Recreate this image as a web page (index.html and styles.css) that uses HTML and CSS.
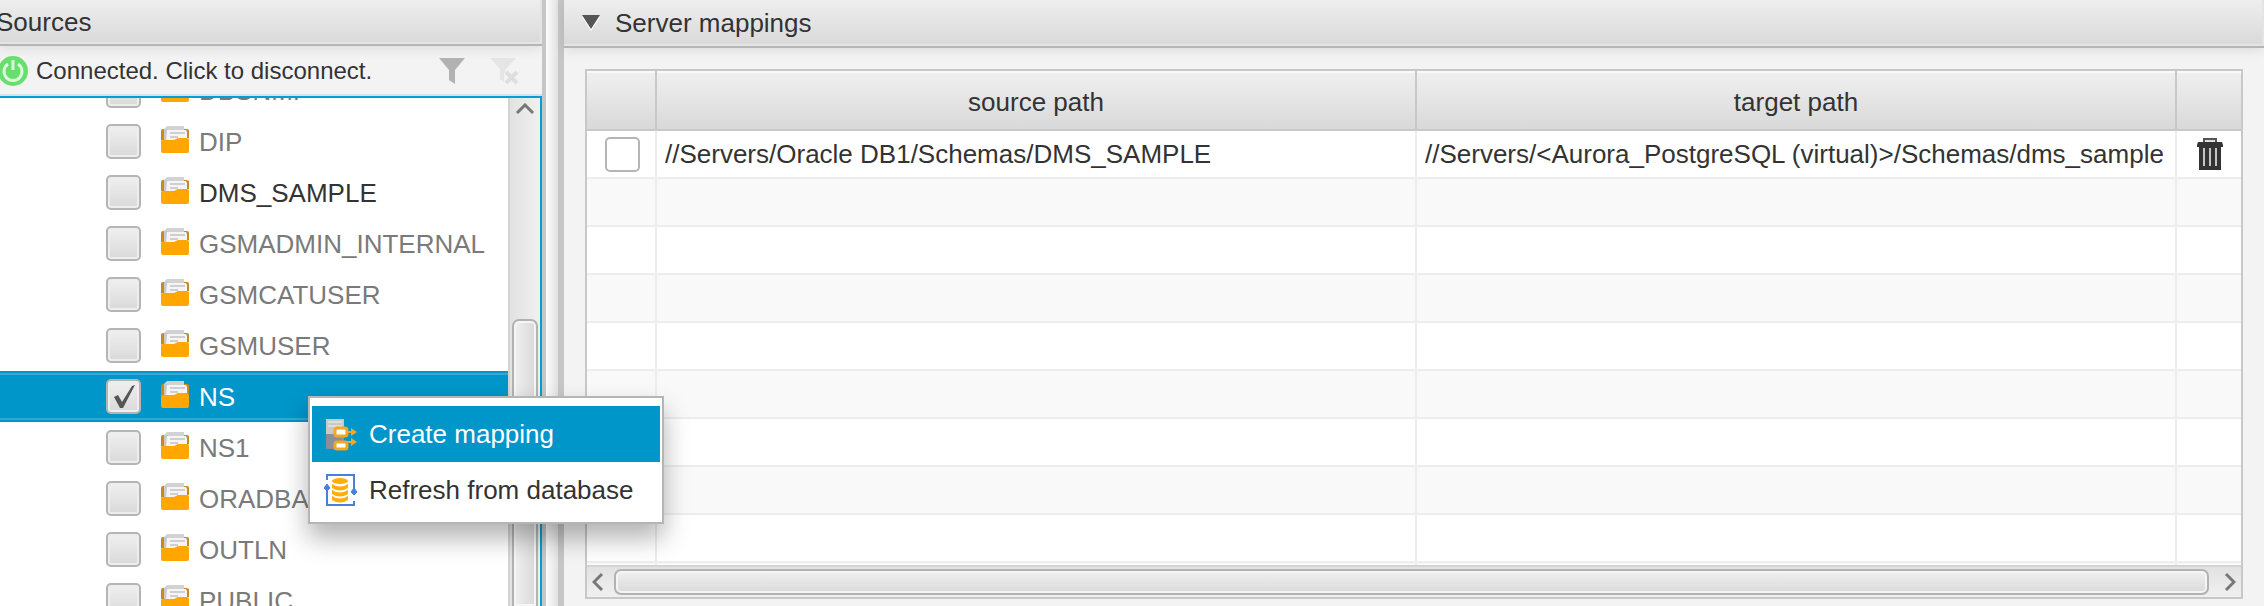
FILE: index.html
```html
<!DOCTYPE html>
<html lang="en">
  <head>
    <meta charset="UTF-8" />
    <meta name="viewport" content="width=device-width, initial-scale=1.0" />
    <title>Server mappings</title>
    <link rel="stylesheet" href="styles.css">
  </head>
  <body>
    <!-- shared icons -->
    <svg class="sprite" aria-hidden="true">
      <symbol id="folder" viewBox="0 0 32 32">
        <path d="M2 5q0-2 2-2h3v11H2zM25 3h3q2 0 2 2v7h-5z" fill="#c98a1c" />
        <path d="M5 3l3-3h17v4H5z" fill="#d2d2d2" />
        <path d="M5 3h4v12H5z" fill="#cacaca" />
        <path d="M8 4h19l1 2v8H18l-3 2H7z" fill="#f5f5f5" />
        <path d="M11 7h15M11 11h8" stroke="#cfcfcf" stroke-width="2" />
        <path d="M2 15q0-1 2-1h11l4-2h9q2 0 2 2v11q0 2-2 2H4q-2 0-2-2z" fill="#ffa600" />
      </symbol>
    </svg>

    <div class="app">
      <section class="sources">
        <h2 class="panel-title">Sources</h2>
        <div class="toolbar">
          <button type="button" class="connection">
            <svg width="30" height="30" viewBox="0 0 30 30">
              <circle cx="15" cy="15" r="15" fill="#67df6c" />
              <path d="M10 8a9 9 0 1 0 10 0M15 4v10" fill="none" stroke="#dcfadc" stroke-width="3" />
            </svg>
            Connected. Click to disconnect.
          </button>
          <button type="button" class="tool" aria-label="Filter">
            <svg width="28" height="28" viewBox="0 0 28 28">
              <path d="M1 1h26L17 13v14l-6-4V13z" fill="#b2b2b2" />
            </svg>
          </button>
          <button type="button" class="tool" aria-label="Clear filter" disabled>
            <svg width="28" height="28" viewBox="0 0 28 28">
              <path d="M0 1h26L16 12l-2 5v8l-4-3V12z" fill="#e5e5e5" />
              <path d="M16 15l11 11M27 15L16 26" stroke="#dedede" stroke-width="4" />
            </svg>
          </button>
        </div>

        <div class="tree-box">
          <ul class="tree">
            <li><label><input type="checkbox"><svg class="folder"><use href="#folder" /></svg>DBSNMP</label></li>
            <li><label><input type="checkbox"><svg class="folder"><use href="#folder" /></svg>DIP</label></li>
            <li class="mapped"><label><input type="checkbox"><svg class="folder"><use href="#folder" /></svg>DMS_SAMPLE</label></li>
            <li><label><input type="checkbox"><svg class="folder"><use href="#folder" /></svg>GSMADMIN_INTERNAL</label></li>
            <li><label><input type="checkbox"><svg class="folder"><use href="#folder" /></svg>GSMCATUSER</label></li>
            <li><label><input type="checkbox"><svg class="folder"><use href="#folder" /></svg>GSMUSER</label></li>
            <li class="selected"><label><input type="checkbox" checked><svg class="folder"><use href="#folder" /></svg>NS</label></li>
            <li><label><input type="checkbox"><svg class="folder"><use href="#folder" /></svg>NS1</label></li>
            <li><label><input type="checkbox"><svg class="folder"><use href="#folder" /></svg>ORADBA</label></li>
            <li><label><input type="checkbox"><svg class="folder"><use href="#folder" /></svg>OUTLN</label></li>
            <li><label><input type="checkbox"><svg class="folder"><use href="#folder" /></svg>PUBLIC</label></li>
          </ul>
          <div class="scroll-y">
            <button type="button" aria-label="Scroll up">
              <svg width="20" height="12" viewBox="0 0 20 12">
                <path d="M2 10l8-8 8 8" fill="none" stroke="#777" stroke-width="3" />
              </svg>
            </button>
            <div class="thumb"></div>
          </div>
        </div>
      </section>

      <div class="splitter"></div>

      <section class="mappings">
        <h2 class="panel-title">
          <svg width="18" height="16" viewBox="0 0 18 16">
            <path d="M0 2h18L9 16z" fill="#fff" />
            <path d="M0 0h18L9 14z" fill="#555" />
          </svg>
          Server mappings
        </h2>
        <div class="mappings-body">
          <div class="table-box">
            <div class="table-view">
              <table>
                <colgroup>
                  <col class="col-check">
                  <col>
                  <col>
                  <col class="col-delete">
                </colgroup>
                <thead>
                  <tr>
                    <th></th>
                    <th>source path</th>
                    <th>target path</th>
                    <th></th>
                  </tr>
                </thead>
                <tbody>
                  <tr>
                    <td class="center"><input type="checkbox" class="flat" aria-label="Select mapping"></td>
                    <td>//Servers/Oracle DB1/Schemas/DMS_SAMPLE</td>
                    <td>//Servers/&lt;Aurora_PostgreSQL (virtual)&gt;/Schemas/dms_sample</td>
                    <td class="center">
                      <button type="button" class="delete" aria-label="Delete mapping">
                        <svg width="26" height="32" viewBox="0 0 26 32">
                          <path d="M6 0h14v5H6z" fill="#555" />
                          <path d="M8 2h10v2H8z" fill="#ddd" />
                          <path d="M1 4h24l1 3v2H0V7z" fill="#333" />
                          <path d="M2 9h22v23H2z" fill="#333" />
                          <path d="M7 10v18M13 10v18M19 10v18" stroke="#c4c4c4" stroke-width="2" />
                        </svg>
                      </button>
                    </td>
                  </tr>
                  <tr><td></td><td></td><td></td><td></td></tr>
                  <tr><td></td><td></td><td></td><td></td></tr>
                  <tr><td></td><td></td><td></td><td></td></tr>
                  <tr><td></td><td></td><td></td><td></td></tr>
                  <tr><td></td><td></td><td></td><td></td></tr>
                  <tr><td></td><td></td><td></td><td></td></tr>
                  <tr><td></td><td></td><td></td><td></td></tr>
                  <tr><td></td><td></td><td></td><td></td></tr>
                  <tr><td></td><td></td><td></td><td></td></tr>
                </tbody>
              </table>
            </div>
            <div class="scroll-x">
              <button type="button" aria-label="Scroll left">
                <svg width="12" height="20" viewBox="0 0 12 20">
                  <path d="M10 2l-8 8 8 8" fill="none" stroke="#777" stroke-width="3" />
                </svg>
              </button>
              <div class="thumb"></div>
              <button type="button" aria-label="Scroll right">
                <svg width="12" height="20" viewBox="0 0 12 20">
                  <path d="M2 2l8 8-8 8" fill="none" stroke="#777" stroke-width="3" />
                </svg>
              </button>
            </div>
          </div>
        </div>
      </section>
    </div>

    <div class="context-menu" role="menu">
      <button type="button" role="menuitem" class="active">
        <svg width="34" height="34" viewBox="0 0 34 34">
          <path d="M2 2h18v15H2z" fill="#c9c9c9" />
          <path d="M4 5h14M4 9h14" stroke="#dedede" stroke-width="2" />
          <path d="M2 17h18v15H2z" fill="#8a8d9c" />
          <path d="M22 15h8M22 25h8" stroke="#f5a623" stroke-width="2" />
          <path d="M27 11l6 4-6 4zM27 21l6 4-6 4z" fill="#f5a623" />
          <rect x="11" y="11" width="12" height="8" rx="2" fill="#fff" stroke="#f5a623" stroke-width="3" />
          <rect x="11" y="25" width="12" height="7" rx="2" fill="#fff" stroke="#f5a623" stroke-width="3" />
        </svg>
        Create mapping
      </button>
      <button type="button" role="menuitem">
        <svg width="34" height="34" viewBox="0 0 34 34">
          <path d="M3 7V2h27v17M30 28v4H3V16" fill="none" stroke="#4a80d9" stroke-width="2" />
          <path d="M3 11l3 4-3 3-3-3zM30 15l3 4-3 3-3-3z" fill="#4a80d9" stroke="#4a80d9" />
          <ellipse cx="16" cy="8" rx="8" ry="3" fill="#ffae0c" />
          <path d="M8 11q8 5 16 0v4q-8 5-16 0zM8 17q8 5 16 0v4q-8 5-16 0zM8 23q8 5 16 0v4q-8 5-16 0z" fill="#ffae0c" />
        </svg>
        Refresh from database
      </button>
    </div>
  </body>
</html>
```

FILE: styles.css
```css
* {
  box-sizing: border-box;
}

body {
  margin: 0;
  font-family: "Liberation Sans", Arial, sans-serif;
  font-size: 26px;
  line-height: 32px;
  color: #333;
  background: #f3f3f3;
}

button {
  display: flex;
  align-items: center;
  padding: 0;
  border: none;
  background: none;
  font: inherit;
  color: inherit;
  cursor: pointer;
}

.sprite {
  display: none;
}

.app {
  display: grid;
  grid-template-columns: 542px 22px 1fr;
  height: 100vh;
  overflow: hidden;
}

.panel-title {
  display: flex;
  align-items: center;
  flex: none;
  margin: 0;
  height: 46px;
  border-bottom: 2px solid #b5b5b5;
  background: linear-gradient(#eee, #d9d9d9);
  box-shadow: inset -2px -2px #e4e4e4, 0 2px 12px rgba(0, 0, 0, 0.1);
  font-size: 26px;
  font-weight: normal;
}

/* Sources panel */
.sources {
  display: flex;
  flex-direction: column;
  min-height: 0;
  margin-left: -4px;
}

.toolbar {
  display: flex;
  align-items: center;
  gap: 24px;
  height: 50px;
  padding: 0 24px 0 2px;
}

.connection {
  gap: 8px;
  margin-right: auto;
  font-size: 24px;
}

.tree-box {
  display: flex;
  flex: 1;
  min-height: 0;
  border-top: 2px solid #039ed3;
  border-right: 2px solid #039ed3;
  box-shadow: 0 0 0 2px #cfe6ef;
  background: #fff;
  overflow: hidden;
}

/* the list is scrolled, so its first row is cut */
.tree {
  flex: 1;
  margin: -33px 0 0;
  padding: 0;
  list-style: none;
  color: #7a7a7a;
}

.tree label {
  display: flex;
  align-items: center;
  height: 51px;
  padding-left: 110px;
}

.tree .mapped {
  color: #333;
}

.tree .selected {
  background: #0096c9;
  border: solid #0096c9;
  border-width: 2px 0;
  color: #fff;
}

.tree .selected label {
  height: 47px;
  box-shadow: inset 0 2px #30aad5, inset 0 -2px #30aad5;
}

.folder {
  width: 32px;
  height: 32px;
  margin: 0 8px 0 18px;
}

input[type="checkbox"] {
  appearance: none;
  flex: none;
  width: 35px;
  height: 35px;
  margin: 0;
  border: 2px solid #b5b5b5;
  border-radius: 5px;
  background: linear-gradient(#f0f0f0, #d9d9d9);
  box-shadow: inset 0 0 0 2px #eee;
}

input[type="checkbox"]:checked {
  background: url("data:image/svg+xml,%3Csvg xmlns='http://www.w3.org/2000/svg' viewBox='0 0 31 31'%3E%3Cpath d='M6 16l4-2 4 7L24 5l3-1-12 23h-3z' fill='%23555'/%3E%3C/svg%3E"),
    linear-gradient(#f0f0f0, #d9d9d9);
}

input[type="checkbox"].flat {
  display: block;
  background: #fff;
  box-shadow: none;
}

/* Scroll bars */
.thumb {
  border: 2px solid #b2b2b2;
  border-radius: 7px;
  background: linear-gradient(#f0f0f0, #d9d9d9);
  box-shadow: inset 0 0 0 2px #f5f5f5;
}

.scroll-y {
  display: flex;
  flex-direction: column;
  align-items: center;
  width: 32px;
  padding-top: 4px;
  border-left: 2px solid #d4d4d4;
  background: linear-gradient(90deg, #e2e2e2, #f0f0f0);
}

.scroll-y button {
  height: 14px;
}

.scroll-y .thumb {
  flex: 1;
  width: 26px;
  margin-top: 203px;
  border-bottom: none;
  border-radius: 7px 7px 0 0;
  background: linear-gradient(90deg, #f0f0f0, #d9d9d9);
}

.scroll-x {
  display: flex;
  align-items: center;
  height: 32px;
  border-top: 2px solid #d4d4d4;
  background: linear-gradient(#e2e2e2, #f0f0f0);
}

.scroll-x button {
  width: 27px;
  padding-left: 5px;
}

.scroll-x button:last-child {
  justify-content: flex-end;
  width: 32px;
  padding: 0 5px 0 0;
}

.scroll-x .thumb {
  flex: 1;
  height: 26px;
}

.splitter {
  border: solid #c6c6c6;
  border-width: 0 6px 0 4px;
  background: linear-gradient(90deg, #fcfcfc, #e2e2e2);
}

/* Server mappings panel */
.mappings {
  display: flex;
  flex-direction: column;
  min-width: 0;
  min-height: 0;
}

.mappings .panel-title {
  gap: 15px;
  height: 48px;
  padding: 0 18px;
}

.mappings-body {
  display: flex;
  flex: 1;
  min-height: 0;
  padding: 21px 21px 7px;
}

.table-box {
  display: flex;
  flex: 1;
  flex-direction: column;
  min-width: 0;
  border: 2px solid #c8c8c8;
}

.table-view {
  flex: 1;
  min-height: 0;
  overflow: hidden;
}

table {
  width: 100%;
  table-layout: fixed;
  border-spacing: 0;
  background: #fff;
}

.col-check {
  width: 70px;
}

.col-delete {
  width: 64px;
}

th {
  height: 60px;
  padding: 4px 0 0;
  border: solid #c8c8c8;
  border-width: 0 2px 2px 0;
  background: linear-gradient(#f0f0f0, #d9d9d9);
  box-shadow: inset 0 2px #fafafa;
  font-weight: normal;
}

td {
  height: 48px;
  padding: 0 8px;
  border: solid #ededed;
  border-width: 0 2px 2px 0;
  white-space: nowrap;
}

th:last-child,
td:last-child {
  border-right: none;
}

tbody tr:nth-child(even) {
  background: #f9f9f9;
}

td.center {
  padding: 0 16px 0 18px;
}

.delete {
  margin: 0 auto;
}

/* Context menu */
.context-menu {
  position: absolute;
  left: 308px;
  top: 396px;
  width: 356px;
  padding: 8px 2px 4px;
  border: 2px solid #b5b5b5;
  background: #fff;
  box-shadow: 0 14px 24px rgba(0, 0, 0, 0.3);
}

.context-menu button {
  gap: 11px;
  width: 100%;
  height: 56px;
  padding-left: 12px;
}

.context-menu button.active {
  background: #0096c9;
  color: #fff;
}
```
